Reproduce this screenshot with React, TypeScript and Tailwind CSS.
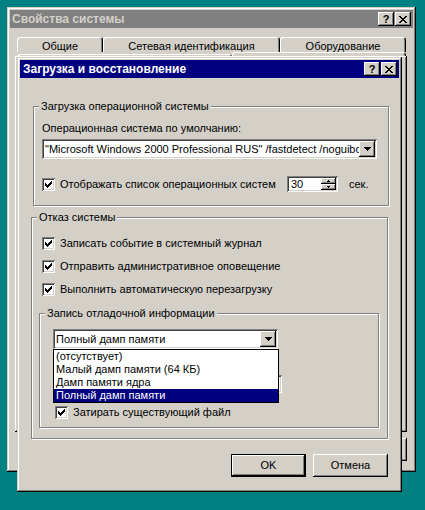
const win =
  'shadow-[inset_-1px_-1px_0_#000,inset_1px_1px_0_#d4d0c8,inset_-2px_-2px_0_#808080,inset_2px_2px_0_#fff]';
const raised =
  'shadow-[inset_-1px_-1px_0_#000,inset_1px_1px_0_#fff,inset_-2px_-2px_0_#808080,inset_2px_2px_0_#d4d0c8]';
const sunken =
  'shadow-[inset_1px_1px_0_#808080,inset_-1px_-1px_0_#fff,inset_2px_2px_0_#404040,inset_-2px_-2px_0_#d4d0c8]';
const etched = 'border border-[#808080] shadow-[inset_1px_1px_0_#fff,1px_1px_0_#fff]';

const CHECK = ['......X', '.....XX', 'X...XXX', 'XX.XXX.', 'XXXXX..', '.XXX...', '..X....'];
const ARROW = ['XXXXXXX', '.XXXXX.', '..XXX..', '...X...'];
const UP = ['.X.', 'XXX'];
const DOWN = ['XXX', '.X.'];
const CLOSE = ['XX....XX', '.XX..XX.', '..XXXX..', '...XX...', '..XXXX..', '.XX..XX.', 'XX....XX'];

function Pix({ rows, color = '#000' }: { rows: string[]; color?: string }) {
  const w = rows[0].length;
  const h = rows.length;
  return (
    <svg width={w} height={h} viewBox={`0 0 ${w} ${h}`} shapeRendering="crispEdges" className="block">
      {rows.flatMap((r, y) =>
        r.split('').map((c, x) =>
          c === 'X' ? <rect key={`${x}-${y}`} x={x} y={y} width={1} height={1} fill={color} /> : null,
        ),
      )}
    </svg>
  );
}

function CapButtons() {
  return (
    <div className="flex gap-[1px]">
      <div className={`w-[16px] h-[14px] bg-[#d4d0c8] ${raised} flex items-center justify-center font-bold text-[11px] leading-none text-black`}>
        ?
      </div>
      <div className={`w-[16px] h-[14px] bg-[#d4d0c8] ${raised} flex items-center justify-center`}>
        <Pix rows={CLOSE} />
      </div>
    </div>
  );
}

function Checkbox({ label, className = '' }: { label: string; className?: string }) {
  return (
    <div className={`flex items-center h-[13px] ${className}`}>
      <div className={`w-[13px] h-[13px] bg-white ${sunken} flex items-center justify-center shrink-0`}>
        <Pix rows={CHECK} />
      </div>
      <span className="ml-[5px] leading-[13px] whitespace-nowrap">{label}</span>
    </div>
  );
}

function DropButton() {
  return (
    <div className={`w-[16px] h-[16px] bg-[#d4d0c8] ${raised} flex items-center justify-center shrink-0`}>
      <Pix rows={ARROW} />
    </div>
  );
}

function Group({ label, className, children }: { label: string; className: string; children: React.ReactNode }) {
  return (
    <div className={`relative ${etched} ${className}`}>
      <span className="absolute left-[5px] -top-[7px] px-[2px] bg-[#d4d0c8] leading-[13px] whitespace-nowrap">
        {label}
      </span>
      {children}
    </div>
  );
}

function Tab({ label, className }: { label: string; className: string }) {
  return (
    <div
      className={`flex justify-center pt-[3px] leading-[13px] rounded-t-[3px] shadow-[inset_1px_1px_0_#fff,inset_-1px_0_0_#000,inset_-2px_0_0_#808080] ${className}`}
    >
      {label}
    </div>
  );
}

function OuterWindow() {
  return (
    <div className={`absolute left-[7px] top-[7px] w-[409px] h-[465px] bg-[#d4d0c8] p-[3px] ${win}`}>
      <div className="h-[18px] bg-[#808080] flex items-center justify-between pl-[2px] pr-[2px]">
        <span className="font-bold text-[12px] text-[#d4d0c8] leading-none">Свойства системы</span>
        <CapButtons />
      </div>
      <div className="mt-[9px] ml-[7px] flex h-[15px]">
        <Tab label="Общие" className="w-[86px]" />
        <Tab label="Сетевая идентификация" className="w-[177px]" />
        <Tab label="Оборудование" className="w-[126px]" />
      </div>
      <div className="ml-[7px] flex h-[4px] overflow-hidden">
        <div className="w-[215px] mt-[2px] h-[6px] rounded-t-[3px] shadow-[inset_1px_1px_0_#fff,inset_-1px_0_0_#000]" />
        <div className="w-[174px] h-[6px] rounded-t-[3px] shadow-[inset_1px_1px_0_#fff,inset_-1px_0_0_#000,inset_-2px_0_0_#808080]" />
      </div>
      <div className={`ml-[5px] w-[392px] h-[376px] ${raised}`} />
      <div className="ml-[5px] w-[392px] mt-[6px] flex justify-end gap-[6px]">
        <div className={`w-[75px] h-[23px] ${raised}`} />
        <div className={`w-[75px] h-[23px] ${raised}`} />
        <div className={`w-[75px] h-[23px] ${raised}`} />
      </div>
    </div>
  );
}

function Dialog() {
  return (
    <div className={`absolute left-[17px] top-[57px] w-[385px] h-[435px] bg-[#d4d0c8] p-[3px] ${win}`}>
      <div className="h-[18px] bg-[#000080] flex items-center justify-between pl-[3px] pr-[2px]">
        <span className="font-bold text-[12px] text-white leading-none">Загрузка и восстановление</span>
        <CapButtons />
      </div>

      <Group label="Загрузка операционной системы" className="ml-[13px] mt-[28px] w-[356px] h-[100px]">
        <div className="pl-[8px] pt-[15px]">
          <div className="leading-[13px]">Операционная система по умолчанию:</div>
          <div className={`mt-[4px] flex h-[20px] w-[335px] bg-white p-[2px] ${sunken}`}>
            <div className="flex-1 overflow-hidden whitespace-nowrap leading-[16px] pl-[1px]">
              "Microsoft Windows 2000 Professional RUS" /fastdetect /noguiboot
            </div>
            <DropButton />
          </div>
          <div className="mt-[17px] flex items-center h-[16px]">
            <Checkbox label="Отображать список операционных систем" className="w-[245px]" />
            <div className={`flex w-[51px] h-[16px] bg-white p-[2px] ${sunken}`}>
              <div className="flex-1 leading-[12px] pl-[2px]">30</div>
              <div className="flex flex-col w-[15px]">
                <div className={`h-[6px] bg-[#d4d0c8] ${raised} flex items-center justify-center`}>
                  <Pix rows={UP} />
                </div>
                <div className={`h-[6px] bg-[#d4d0c8] ${raised} flex items-center justify-center`}>
                  <Pix rows={DOWN} />
                </div>
              </div>
            </div>
            <span className="ml-[11px] leading-[13px]">сек.</span>
          </div>
        </div>
      </Group>

      <Group label="Отказ системы" className="ml-[11px] mt-[11px] w-[357px] h-[222px]">
        <div className="pl-[7px] pt-[19px]">
          <div className="flex flex-col gap-[10px] ml-[3px]">
            <Checkbox label="Записать событие в системный журнал" />
            <Checkbox label="Отправить административное оповещение" />
            <Checkbox label="Выполнить автоматическую перезагрузку" />
          </div>
          <Group label="Запись отладочной информации" className="mt-[17px] w-[340px] h-[115px]">
            <div className="pl-[13px] pt-[15px]">
              <div className="relative w-[225px] h-[20px]">
                <div className={`flex h-[20px] w-[225px] bg-white p-[2px] ${sunken}`}>
                  <div className="flex-1 overflow-hidden whitespace-nowrap leading-[16px] pl-[1px]">
                    Полный дамп памяти
                  </div>
                  <DropButton />
                </div>
                <div className="absolute left-0 top-[20px] z-10 w-[226px] h-[54px] bg-white border border-black leading-[13px]">
                  <div className="pl-[2px]">(отсутствует)</div>
                  <div className="pl-[2px]">Малый дамп памяти (64 КБ)</div>
                  <div className="pl-[2px]">Дамп памяти ядра</div>
                  <div className="pl-[2px] bg-[#000080] text-white">Полный дамп памяти</div>
                </div>
              </div>
              <div className={`mt-[26px] w-[229px] h-[18px] bg-white ${sunken}`} />
              <Checkbox label="Затирать существующий файл" className="mt-[13px] ml-[2px]" />
            </div>
          </Group>
        </div>
      </Group>

      <div className="mt-[15px] pr-[11px] flex justify-end gap-[7px]">
        <div className="w-[75px] h-[23px] border border-black">
          <div className="w-full h-full flex items-center justify-center shadow-[inset_-1px_-1px_0_#000,inset_1px_1px_0_#fff,inset_-2px_-2px_0_#808080]">
            OK
          </div>
        </div>
        <div className={`w-[75px] h-[23px] ${raised} flex items-center justify-center`}>Отмена</div>
      </div>
    </div>
  );
}

export default function App() {
  return (
    <div className="relative w-[425px] h-[510px] overflow-hidden bg-[#008080] font-['Liberation_Sans',Arial,sans-serif] text-[11px] text-black">
      <OuterWindow />
      <Dialog />
    </div>
  );
}
